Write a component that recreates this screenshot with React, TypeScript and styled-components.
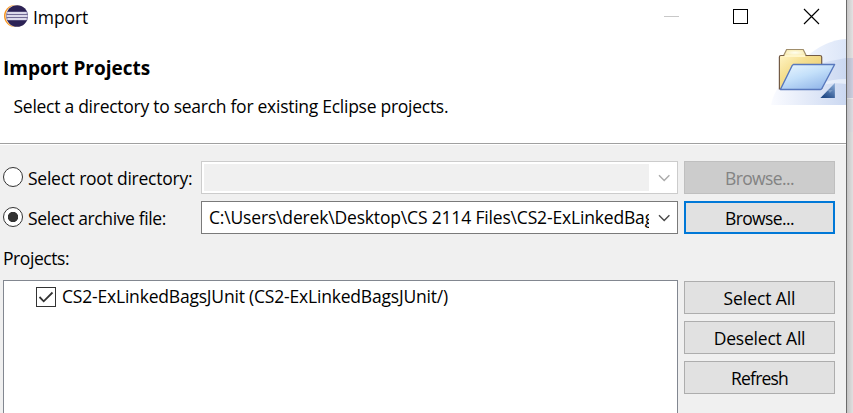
import React from "react";
import styled, { createGlobalStyle } from "styled-components";

const GlobalStyle = createGlobalStyle`
  * { box-sizing: border-box; }
  body { margin: 0; overflow: hidden; }
`;

const Desktop = styled.div`
  display: flex;
  width: 853px;
  height: 413px;
  overflow: hidden;
  color: #000;
  font: 17.5px/24px "Open Sans", "Noto Sans", sans-serif;
  white-space: nowrap;
`;

const Dialog = styled.main`
  display: flex;
  flex-direction: column;
  width: 847px;
  border-right: 1px solid #6b6b6b;
  background: #f0f0f0;
`;

const Backdrop = styled.div`
  flex: 1;
  background:
    linear-gradient(90deg, rgba(0, 0, 0, 0.14), rgba(0, 0, 0, 0.02)),
    linear-gradient(#e8e7e7 58px, #d0d3e4 58px, #d0d3e4 98px, #f0f0f2 98px, #f0f0f2 99px, #e1e1e6 99px, #e1e1e6 132px, #e4e4e4 132px);
`;

const Label = styled.span<{ $spacing?: number }>`
  letter-spacing: ${({ $spacing = 0 }) => $spacing}px;
`;

const TitleBar = styled.header`
  display: flex;
  height: 38px;
  padding-left: 4px;
  background: #fff;
`;

const AppIcon = styled.svg`
  width: 24px;
  height: 24px;
  margin: 4px 5px 0 0;
`;

const TitleText = styled(Label)`
  flex: 1;
  padding-top: 5px;
`;

const WindowControls = styled.svg`
  width: 182px;
  height: 34px;
`;

const Banner = styled.section`
  display: flex;
  justify-content: space-between;
  height: 107px;
  padding-left: 3px;
  border-bottom: 1px solid #fff;
  background: #fff;
  box-shadow: inset 0 -1px #a0a0a0;
`;

const BannerText = styled.div`
  display: flex;
  flex-direction: column;
  gap: 14px;
  padding-top: 18px;
`;

const Heading = styled.h1`
  margin: 0;
  font-size: 19px;
  line-height: 24px;
  font-weight: 700;
  letter-spacing: -0.02px;
`;

const Description = styled(Label)`
  padding-left: 10.5px;
`;

const BannerArt = styled.svg`
  width: 77px;
  height: 68px;
`;

const Sources = styled.section`
  display: grid;
  grid-template-columns: 198px 477px 151px;
  grid-auto-rows: 33px;
  row-gap: 7px;
  padding: 16px 0 0 3px;

  & > :nth-child(3n) {
    margin-left: 6px;
    width: 151px;
  }
`;

const RadioOption = styled.label`
  display: flex;
  gap: 5px;
  padding-top: 5px;
`;

const Radio = styled.span<{ $checked?: boolean }>`
  width: 20px;
  height: 20px;
  margin-top: 1px;
  border: 1px solid #333;
  border-radius: 50%;
  background: ${({ $checked }) =>
    $checked ? "radial-gradient(circle, #333 4.8px, #fff 5.5px)" : "#fff"};
`;

const Combo = styled.div<{ $disabled?: boolean }>`
  display: flex;
  border: 1px solid ${({ $disabled }) => ($disabled ? "#ccc" : "#7a7a7a")};
  background: #fff;
`;

const ComboValue = styled.div<{ $disabled?: boolean }>`
  width: 445px;
  margin: 2px 0 2px 2px;
  padding: 1px 0 0 5px;
  overflow: hidden;
  background: ${({ $disabled }) => ($disabled ? "#f0f0f0" : "#fff")};
`;

const ComboArrow = styled.svg<{ $disabled?: boolean }>`
  width: 28px;
  height: 31px;
  fill: none;
  stroke: ${({ $disabled }) => ($disabled ? "#aaa" : "#484848")};
  stroke-width: 1.4;
`;

const Button = styled.button<{ $primary?: boolean }>`
  display: flex;
  justify-content: center;
  height: 33px;
  padding: 0;
  border: ${({ $primary }) => ($primary ? "2px solid #0078d7" : "1px solid #adadad")};
  padding-top: ${({ $primary }) => ($primary ? 3 : 4)}px;
  background: #e1e1e1;
  color: #000;
  font: inherit;

  &:disabled {
    border-color: #bfbfbf;
    background: #ccc;
    color: #838383;
  }
`;

const ProjectsLabel = styled.div`
  height: 46px;
  padding: 12px 0 0 3px;
`;

const Projects = styled.section`
  display: flex;
  gap: 6px;
  flex: 1;
  padding-left: 3px;
`;

const Tree = styled.div`
  width: 675px;
  border: 1px solid #828790;
  border-bottom: 0;
  background: #fff;
`;

const TreeItem = styled.div`
  display: flex;
  gap: 6px;
  padding: 3px 0 0 32px;
`;

const Checkbox = styled.svg`
  width: 20px;
  height: 20px;
  margin-top: 3px;
`;

const Actions = styled.div`
  display: flex;
  flex-direction: column;
  gap: 7px;
  width: 151px;
  padding-top: 1px;
`;

function EclipseLogo() {
  return (
    <AppIcon viewBox="0 0 24 24">
      <circle cx="11" cy="12" r="11" fill="#f7941e" />
      <circle cx="12.5" cy="12" r="11" fill="#fff3e2" />
      <circle cx="13.1" cy="12" r="10.8" fill="#2c2255" />
      <path d="M2.8 9h20.7M2.3 12h21.6M2.8 15h20.7" stroke="#b9b3d6" strokeWidth="2.3" />
      <path d="M4 9h18M3 12h20M4 15h18" stroke="#fff" strokeWidth="1" />
    </AppIcon>
  );
}

function CaptionButtons() {
  return (
    <WindowControls viewBox="0 0 182 34" fill="none" stroke="#000">
      <path d="M0 16.5h15" stroke="#c8c8c8" />
      <rect x="69.5" y="9.5" width="14" height="14" />
      <path d="M140 9l15 15M155 9l-15 15" strokeWidth="1.15" />
    </WindowControls>
  );
}

function FolderArt() {
  return (
    <BannerArt viewBox="0 0 77 68">
      <defs>
        <linearGradient id="swoosh">
          <stop offset="0" stopColor="#fafbff" />
          <stop offset="1" stopColor="#cbd8f1" />
        </linearGradient>
        <linearGradient id="arc">
          <stop offset="0" stopColor="#f4f7fe" />
          <stop offset="1" stopColor="#dce6f8" />
        </linearGradient>
        <linearGradient id="folderBack" x1="0" y1="0" x2="1" y2="1">
          <stop offset="0" stopColor="#fff4c4" />
          <stop offset=".35" stopColor="#f5df91" />
          <stop offset="1" stopColor="#e6c663" />
        </linearGradient>
        <linearGradient id="folderFront" x1="0" y1="0" x2=".7" y2="1">
          <stop offset="0" stopColor="#ecf7ff" />
          <stop offset=".5" stopColor="#c4e0fa" />
          <stop offset="1" stopColor="#94b8ea" />
        </linearGradient>
        <linearGradient id="corner" x1="1" y1="0" x2=".4" y2="1">
          <stop offset="0" stopColor="#8eb0da" />
          <stop offset="1" stopColor="#234b88" />
        </linearGradient>
        <radialGradient id="tab">
          <stop offset="0" stopColor="#fffef0" />
          <stop offset="1" stopColor="#f8ebb0" />
        </radialGradient>
      </defs>
      <path d="M36 20Q56 2 77 1v66H30z" fill="url(#arc)" />
      <path d="M2 67Q6 46 26 36Q50 24 77 20v47z" fill="url(#swoosh)" />
      <path d="M50 46Q62 41 77 41v5Q62 44 50 48z" fill="#f0f5fe" opacity=".7" />
      <g transform="translate(1.9 0)">
        <path d="M12.5 18l3.2-6.5h16.6l3.2 6.5z" fill="url(#tab)" stroke="#a08e6b" strokeWidth="1.2" />
        <path d="M8.5 51V19q0-1.5 1.5-1.5h39q1.8 0 1.8 1.5v31.5z" fill="url(#folderBack)" stroke="#735b45" strokeWidth="1.2" />
        <path d="M13.5 18h21" stroke="#fff6cb" strokeWidth="2" />
        <path d="M22.5 26.5h41.2L51 50.5q-.5 1-1.5 1H9.5l11.8-24z" fill="url(#folderFront)" stroke="#5878bd" strokeWidth="1.4" strokeLinejoin="round" />
        <path d="M64 45v15H49.5z" fill="url(#corner)" />
        <path d="M57 52h5l-3 3" fill="#8ca8cd" opacity=".65" />
      </g>
    </BannerArt>
  );
}

function DropArrow({ disabled }: { disabled?: boolean }) {
  return (
    <ComboArrow viewBox="0 0 28 31" $disabled={disabled}>
      <path d="M10 13.2l5.2 5.2 5.2-5.2" />
    </ComboArrow>
  );
}

const actions = [
  { text: "Select All", spacing: -0.09 },
  { text: "Deselect All", spacing: -0.19 },
  { text: "Refresh", spacing: -0.8 },
];

export default function App() {
  return (
    <Desktop>
      <GlobalStyle />
      <Dialog>
        <TitleBar>
          <EclipseLogo />
          <TitleText $spacing={-0.1}>Import</TitleText>
          <CaptionButtons />
        </TitleBar>
        <Banner>
          <BannerText>
            <Heading>Import Projects</Heading>
            <Description $spacing={-0.27}>
              Select a directory to search for existing Eclipse projects.
            </Description>
          </BannerText>
          <FolderArt />
        </Banner>
        <Sources>
          <RadioOption>
            <Radio />
            <Label $spacing={-0.24}>Select root directory:</Label>
          </RadioOption>
          <Combo $disabled>
            <ComboValue $disabled />
            <DropArrow disabled />
          </Combo>
          <Button disabled>
            <Label $spacing={-0.6}>Browse...</Label>
          </Button>
          <RadioOption>
            <Radio $checked />
            <Label $spacing={-0.38}>Select archive file:</Label>
          </RadioOption>
          <Combo>
            <ComboValue>
              <Label $spacing={-0.17}>
                {"C:\\Users\\derek\\Desktop\\CS 2114 Files\\CS2-ExLinkedBagsJUnit.zip"}
              </Label>
            </ComboValue>
            <DropArrow />
          </Combo>
          <Button $primary>
            <Label $spacing={-0.6}>Browse...</Label>
          </Button>
        </Sources>
        <ProjectsLabel>
          <Label $spacing={-0.426}>Projects:</Label>
        </ProjectsLabel>
        <Projects>
          <Tree>
            <TreeItem>
              <Checkbox viewBox="0 0 20 20" fill="#fff" stroke="#333">
                <rect x=".5" y=".5" width="19" height="19" />
                <path d="M3.5 10l4.2 4.3L16.5 5.5" fill="none" strokeWidth="1.8" />
              </Checkbox>
              <Label $spacing={-0.197}>CS2-ExLinkedBagsJUnit (CS2-ExLinkedBagsJUnit/)</Label>
            </TreeItem>
          </Tree>
          <Actions>
            {actions.map(({ text, spacing }) => (
              <Button key={text}>
                <Label $spacing={spacing}>{text}</Label>
              </Button>
            ))}
          </Actions>
        </Projects>
      </Dialog>
      <Backdrop />
    </Desktop>
  );
}
